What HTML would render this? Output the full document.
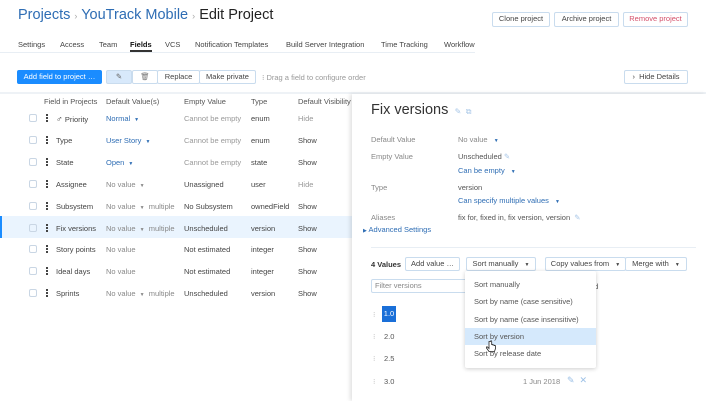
<!DOCTYPE html><html><head><style>
*{margin:0;padding:0;box-sizing:border-box}
body{width:706px;height:401px;overflow:hidden;background:#fff;font-family:"Liberation Sans",sans-serif;font-size:7.5px;color:#333;position:relative}
.a{position:absolute;white-space:nowrap}
.btn{position:absolute;border:1px solid #c9dcee;border-radius:2px;height:14px;line-height:12px;text-align:center;color:#444;font-size:7.5px;background:#fff}
.blue{color:#2e6db4}.gray{color:#888}
.cb{position:absolute;left:29px;width:8px;height:8px;border:1px solid #c9d6e4;border-radius:2px}
.dr{position:absolute;left:46px;width:2px;height:8px;border-left:2px dotted #444}
.car{font-size:5px;margin-left:4px}
</style></head><body>
<div class="a" style="left:18px;top:7px;font-size:14.5px;color:#222"><span class="blue">Projects</span> <span style="color:#aaa;font-size:9px">›</span> <span class="blue">YouTrack Mobile</span> <span style="color:#aaa;font-size:9px">›</span> Edit Project</div>
<div class="btn" style="left:492px;top:12px;width:58px;height:15px">Clone project</div>
<div class="btn" style="left:554px;top:12px;width:65px;height:15px">Archive project</div>
<div class="btn" style="left:623px;top:12px;width:65px;height:15px;color:#d4506a">Remove project</div>
<div class="a" style="left:0;top:52px;width:475px;height:1px;background:#e8eef4"></div>
<div class="a" style="left:18px;top:40px;color:#444">Settings</div>
<div class="a" style="left:60px;top:40px;color:#444">Access</div>
<div class="a" style="left:99px;top:40px;color:#444">Team</div>
<div class="a" style="left:130px;top:40px;color:#111;font-weight:bold">Fields</div>
<div class="a" style="left:130px;top:50px;width:22px;height:2px;background:#333"></div>
<div class="a" style="left:165px;top:40px;color:#444">VCS</div>
<div class="a" style="left:195px;top:40px;color:#444">Notification Templates</div>
<div class="a" style="left:286px;top:40px;color:#444">Build Server Integration</div>
<div class="a" style="left:381px;top:40px;color:#444">Time Tracking</div>
<div class="a" style="left:444px;top:40px;color:#444">Workflow</div>
<div class="btn" style="left:17px;top:70px;width:85px;background:#1a8cff;border-color:#1a8cff;color:#fff">Add field to project …</div>
<div class="btn" style="left:106px;top:70px;width:26px;background:#d8e9fb;color:#666">✎</div>
<div class="btn" style="left:132px;top:70px;width:26px;color:#777">🗑</div>
<div class="btn" style="left:157px;top:70px;width:43px">Replace</div>
<div class="btn" style="left:199px;top:70px;width:57px">Make private</div>
<div class="a gray" style="left:262px;top:73px;color:#999">⁝ Drag a field to configure order</div>
<div class="btn" style="left:624px;top:70px;width:64px;height:14px">›&nbsp; Hide Details</div>
<div class="a" style="left:0;top:92px;width:706px;height:2px;background:#eef2f6"></div>
<div class="a" style="left:44px;top:97px;color:#555">Field in Projects</div>
<div class="a" style="left:106px;top:97px;color:#555">Default Value(s)</div>
<div class="a" style="left:184px;top:97px;color:#555">Empty Value</div>
<div class="a" style="left:251px;top:97px;color:#555">Type</div>
<div class="a" style="left:298px;top:97px;color:#555">Default Visibility in</div>
<div class="a" style="left:0;top:216px;width:353px;height:22px;background:#eaf4fe;border-left:2px solid #1a8cff"></div>
<div id="rows"></div>
<script>
var r=[["Priority","Normal",1,"","Cannot be empty","enum","Hide",1],["Type","User Story",1,"","Cannot be empty","enum","Show"],["State","Open",1,"","Cannot be empty","state","Show"],["Assignee","No value",0,"","Unassigned","user","Hide"],["Subsystem","No value",0,"m","No Subsystem","ownedField","Show"],["Fix versions","No value",0,"m","Unscheduled","version","Show"],["Story points","No value",0,"n","Not estimated","integer","Show"],["Ideal days","No value",0,"n","Not estimated","integer","Show"],["Sprints","No value",0,"m","Unscheduled","version","Show"]];
var h="";r.forEach(function(x,i){var y=114+i*21.9;
h+='<div class="cb" style="top:'+(y)+'px"></div><div class="dr" style="top:'+y+'px"></div>';
h+='<div class="a" style="left:56px;top:'+y+'px;color:#444">'+(x[7]?'<span style="font-size:9px">♂</span> ':'')+x[0]+'</div>';
h+='<div class="a" style="left:106px;top:'+y+'px;color:'+(x[2]?'#2e6db4':'#888')+'">'+x[1]+(x[3]=="n"?'':'<span class="car">▼</span>')+(x[3]=="m"?' &nbsp;multiple':'')+'</div>';
h+='<div class="a" style="left:184px;top:'+y+'px;color:'+(x[4]=="Cannot be empty"?'#999':'#444')+'">'+x[4]+'</div>';
h+='<div class="a" style="left:251px;top:'+y+'px;color:#444">'+x[5]+'</div>';
h+='<div class="a" style="left:298px;top:'+y+'px;color:'+(x[6]=="Hide"?'#999':'#444')+'">'+x[6]+'</div>';});
document.getElementById("rows").innerHTML=h;
</script>
<div class="a" style="left:352px;top:94px;width:354px;height:307px;background:#fff;box-shadow:-2px 0 4px rgba(0,0,0,0.12)"></div>
<div class="a" style="left:371px;top:102px;font-size:14.5px;color:#333">Fix versions <span style="font-size:8px;color:#aac8e8">&nbsp;✎ &nbsp;⧉</span></div>
<div class="a gray" style="left:371px;top:135px">Default Value</div>
<div class="a gray" style="left:458px;top:135px">No value <span class="car blue">▼</span></div>
<div class="a gray" style="left:371px;top:152px">Empty Value</div>
<div class="a" style="left:458px;top:152px;color:#555">Unscheduled <span style="color:#aac8e8">✎</span></div>
<div class="a blue" style="left:458px;top:166px">Can be empty <span class="car">▼</span></div>
<div class="a gray" style="left:371px;top:183px">Type</div>
<div class="a" style="left:458px;top:183px;color:#555">version</div>
<div class="a blue" style="left:458px;top:196px">Can specify multiple values <span class="car">▼</span></div>
<div class="a gray" style="left:371px;top:213px">Aliases</div>
<div class="a" style="left:458px;top:213px;color:#555">fix for, fixed in, fix version, version &nbsp;<span style="color:#aac8e8">✎</span></div>
<div class="a blue" style="left:363px;top:225px"><span style="font-size:5px">▶</span> Advanced Settings</div>
<div class="a" style="left:371px;top:247px;width:325px;height:1px;background:#e8eef4"></div>
<div class="a" style="left:371px;top:260px;font-weight:bold;color:#333">4 Values</div>
<div class="btn" style="left:405px;top:257px;width:55px">Add value …</div>
<div class="btn" style="left:466px;top:257px;width:70px">Sort manually <span class="car">▼</span></div>
<div class="btn" style="left:545px;top:257px;width:81px">Copy values from <span class="car">▼</span></div>
<div class="btn" style="left:625px;top:257px;width:62px">Merge with <span class="car">▼</span></div>
<div class="btn" style="left:371px;top:279px;width:100px;text-align:left;padding-left:3px;color:#888">Filter versions</div>
<div class="a" style="left:590px;top:282px;color:#555">ed</div>
<div class="a gray" style="left:373px;top:310px;color:#bbb">⁝</div>
<div class="a" style="left:382px;top:306px;width:14px;height:16px;background:#1a6fd8;color:#fff;line-height:16px;text-align:center">1.0</div>
<div class="a" style="left:373px;top:332px;color:#bbb">⁝</div><div class="a" style="left:384px;top:332px;color:#555">2.0</div>
<div class="a" style="left:373px;top:354px;color:#bbb">⁝</div><div class="a" style="left:384px;top:354px;color:#555">2.5</div>
<div class="a" style="left:373px;top:377px;color:#bbb">⁝</div><div class="a" style="left:384px;top:377px;color:#555">3.0</div>
<div class="a gray" style="left:523px;top:377px">1 Jun 2018</div>
<div class="a" style="left:567px;top:375px;color:#9cc0e6;font-size:9px">✎ &nbsp;✕</div>
<div class="a" style="left:465px;top:271px;width:131px;height:97px;background:#fff;box-shadow:0 1px 4px rgba(0,0,0,0.2);border-radius:2px"></div>
<div class="a" style="left:465px;top:328px;width:131px;height:17px;background:#d5e9fc"></div>
<div class="a" style="left:474px;top:280px;color:#555">Sort manually</div>
<div class="a" style="left:474px;top:297px;color:#555">Sort by name (case sensitive)</div>
<div class="a" style="left:474px;top:315px;color:#555">Sort by name (case insensitive)</div>
<div class="a" style="left:474px;top:332px;color:#555">Sort by version</div>
<div class="a" style="left:474px;top:349px;color:#555">Sort by release date</div>
<svg class="a" style="left:486px;top:340px" width="10" height="13" viewBox="0 0 10 13"><path d="M3 1.5v7L1.5 7c-.8-.6-1.6.2-1 1l2.5 3.5h5.5l1-3V6c0-.8-1.2-.8-1.2 0V5.5c0-.8-1.3-.8-1.3 0V5c0-.8-1.3-.8-1.3 0V1.5c0-1-1.2-1-1.2 0z" fill="#fff" stroke="#222" stroke-width=".8"/></svg>
</body></html>
